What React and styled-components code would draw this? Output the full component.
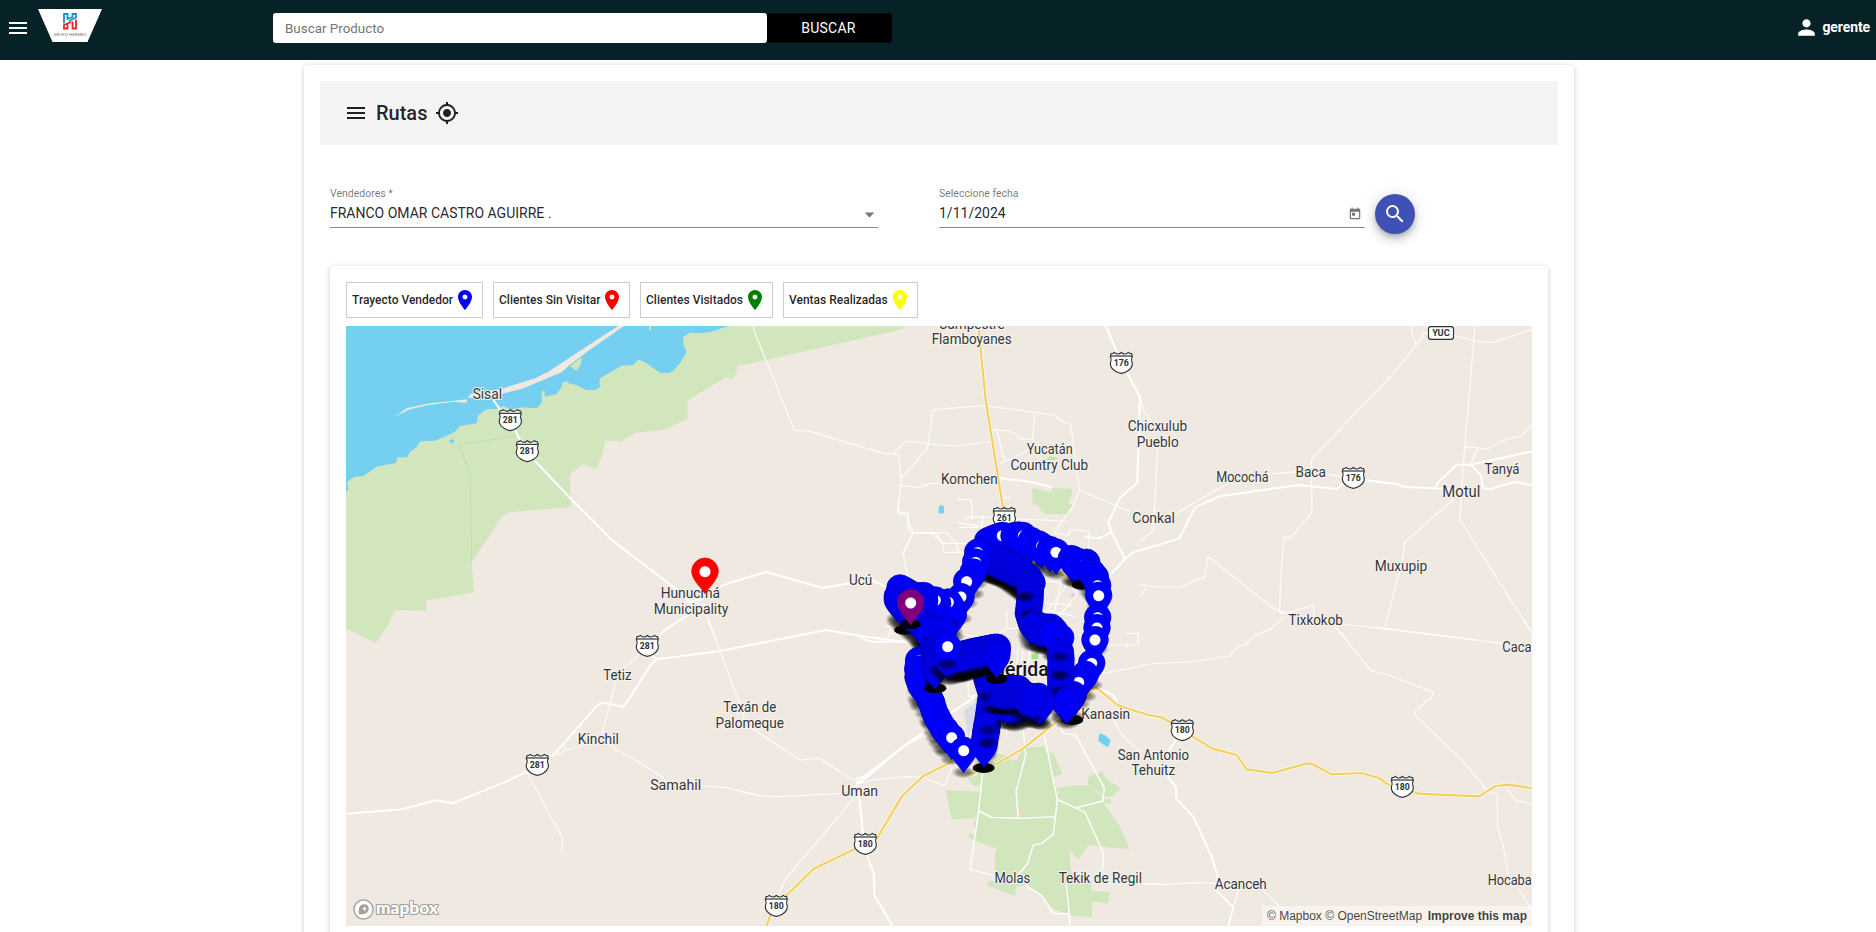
import React from "react";
import styled, { createGlobalStyle } from "styled-components";
import {
  MdMenu,
  MdPerson,
  MdGpsFixed,
  MdSearch,
  MdToday,
  MdLocationOn,
  MdArrowDropDown,
} from "react-icons/md";

const GlobalStyle = createGlobalStyle`
  *, *::before, *::after { box-sizing: border-box; }
  html, body { margin: 0; padding: 0; height: 100%; overflow: hidden; }
  body { background: #fff; font-family: Roboto, "Liberation Sans", sans-serif; color: rgba(0, 0, 0, 0.87); }
`;

const Header = styled.header`
  height: 60px;
  padding: 0 6px 0 3px;
  background: #072227;
  color: #fff;
  display: flex;
  align-items: flex-start;
`;

const MenuButton = styled.button`
  width: 30px;
  height: 24px;
  margin: 16px 5px 0 0;
  padding: 0 3px;
  border: 0;
  background: none;
  color: inherit;
  font-size: 24px;
  line-height: 0;
`;

const LogoSvg = styled.svg`
  display: block;
  margin: 9px 171px 0 0;
`;

const SearchForm = styled.form`
  display: flex;
  margin: 13px 0 0;
  background: #000;
  border-radius: 4px;
`;

const SearchInput = styled.input`
  width: 494px;
  height: 30px;
  border: 0;
  border-radius: 3px;
  padding: 0 12px;
  background: #fff;
  font: 400 13.4px "Roboto", sans-serif;
  &::placeholder { color: #757575; opacity: 1; }
`;

const SearchSubmit = styled.button`
  width: 125px;
  height: 30px;
  border: 0;
  padding: 0 2px 0 0;
  background: none;
  color: #fff;
  font: 400 14px "Roboto", sans-serif;
  letter-spacing: 0.25px;
`;

const User = styled.div`
  margin: 15px 0 0 auto;
  height: 24px;
  display: flex;
  align-items: center;
  gap: 3px;
  font-size: 14px;
  font-weight: 700;
  letter-spacing: -0.1px;
  svg { font-size: 25px; }
  span { line-height: 22px; }
`;

const Page = styled.main`
  width: 1270px;
  height: 900px;
  margin: 5px auto 0 304px;
  padding: 16px;
  border-radius: 4px;
  background: #fff;
  box-shadow: 0 1px 5px rgba(0, 0, 0, 0.22);
`;

const TitleBar = styled.div`
  height: 64px;
  padding: 0 24px;
  background: #f4f4f4;
  display: flex;
  align-items: center;
  gap: 8px;
  svg { font-size: 24px; }
`;

const Title = styled.h1`
  margin: 0;
  font-size: 20px;
  font-weight: 500;
  line-height: 32px;
`;

const Filters = styled.div`
  display: flex;
  align-items: flex-start;
  padding: 41px 10px 0;
  height: 121px;
`;

const Field = styled.div`
  width: ${(p) => p.$width}px;
  margin-right: ${(p) => p.$gap}px;
  padding-top: 1px;
  border-bottom: 1px solid #8c8c8c;
  height: 42px;
`;

const FieldLabel = styled.div`
  font-size: 10.5px;
  line-height: 14px;
  color: rgba(0, 0, 0, 0.54);
`;

const FieldValue = styled.div`
  display: flex;
  align-items: center;
  justify-content: space-between;
  height: 24px;
  font-size: 14px;
  svg { color: rgba(0, 0, 0, 0.54); }
`;

const SelectArrow = styled(MdArrowDropDown)`
  font-size: 23px;
  margin: 2px -3px 0 0;
`;

const DateIcon = styled(MdToday)`
  font-size: 14px;
  margin: 1px 3px 0 0;
`;

const RoundButton = styled.button`
  width: 40px;
  height: 40px;
  margin-top: 8px;
  padding: 0;
  border: 0;
  border-radius: 50%;
  background: #3f51b5;
  color: #fff;
  font-size: 24px;
  display: grid;
  place-items: center;
  box-shadow: 0 3px 5px -1px rgba(0, 0, 0, 0.2), 0 6px 10px rgba(0, 0, 0, 0.14), 0 1px 18px rgba(0, 0, 0, 0.12);
`;

const MapCard = styled.section`
  margin: 0 10px;
  height: 720px;
  padding: 16px;
  border-radius: 4px;
  background: #fff;
  box-shadow: 0 1px 5px rgba(0, 0, 0, 0.22);
`;

const Legend = styled.div`
  display: flex;
  gap: 10px;
  margin-bottom: 8px;
`;

const LegendItem = styled.div`
  width: ${(p) => p.$width}px;
  height: 36px;
  padding-left: 5px;
  border: 1px solid #ccc;
  display: flex;
  align-items: center;
  font-size: 12px;
  font-weight: 500;
  white-space: nowrap;
  svg { font-size: 24px; color: ${(p) => p.$color}; }
`;

const MapView = styled.div`
  position: relative;
  width: 1186px;
  height: 600px;
  overflow: hidden;
  background: #efe9e1;
`;

const MapSvg = styled.svg`
  display: block;
`;

const Attribution = styled.div`
  position: absolute;
  right: 0;
  bottom: 0;
  height: 20px;
  width: 270px;
  padding: 0 5px;
  display: flex;
  justify-content: space-between;
  background: rgba(255, 255, 255, 0.5);
  color: rgba(0, 0, 0, 0.75);
  font: 12px/20px "Liberation Sans", Arial, sans-serif;
  white-space: nowrap;
`;

const MapboxMark = styled.svg`
  position: absolute;
  left: 6px;
  bottom: 5px;
`;

function Logo() {
  return (
    <LogoSvg width="64" height="33" viewBox="0 0 64 33">
      <path d="M0 0H64L49.5 33H14.5Z" fill="#fff" />
      <path d="M26 14.5V5H29.5V10L34.5 8V5H38V8.5L31 12" fill="none" stroke="#1b8fc4" strokeWidth="1.8" />
      <path d="M33 13L26 16V19.5H29.5V15.5M34.5 12.5V19.5H38V10.5" fill="none" stroke="#e3262d" strokeWidth="1.8" />
      <text x="15.5" y="27.2" fontSize="4.3" fill="#777" textLength="33" lengthAdjust="spacingAndGlyphs" fontFamily="Roboto">
        GRUPO HERMES
      </text>
    </LogoSvg>
  );
}

/* Every sector is drafted at three units per pixel from its own origin. */
const Sector = ({ x, y, children }) => (
  <g transform={`translate(${x} ${y}) scale(${1 / 3})`}>{children}</g>
);

const Minor = ({ d }) => <path d={d} fill="none" stroke="#fff" strokeOpacity="0.85" strokeWidth="3.6" strokeLinejoin="round" />;
const Major = ({ d }) => <path d={d} fill="none" stroke="#fff" strokeWidth="6" strokeLinejoin="round" />;
const Highway = ({ d }) => (
  <>
    <path d={d} fill="none" stroke="#fff" strokeWidth="10" strokeLinejoin="round" />
    <path d={d} fill="none" stroke="#f3cf5b" strokeWidth="6.5" strokeLinejoin="round" />
  </>
);
const Park = ({ d }) => <path d={d} fill="#d2e6be" />;
const Water = ({ d }) => <path d={d} fill="#75cff0" />;

const Label = ({ x, y, w, size = 43, color = "#33363b", anchor = "middle", weight = 400, children }) => (
  <text
    x={x}
    y={y}
    textLength={w}
    lengthAdjust="spacingAndGlyphs"
    textAnchor={anchor}
    fontSize={size}
    fontWeight={weight}
    fontFamily="Roboto, sans-serif"
    fill={color}
    stroke="#f7f4f0"
    strokeWidth="6"
    strokeLinejoin="round"
    paintOrder="stroke"
  >
    {children}
  </text>
);

const Shield = ({ x, y, n }) => (
  <g transform={`translate(${x} ${y})`}>
    <path
      d="M-31 -27Q-25 -27 -21 -31Q-16 -26 -10 -26Q-4 -26 0 -31Q4 -26 10 -26Q16 -26 21 -31Q25 -27 31 -27L33 -18Q29 -12 31 -6Q35 2 32 10C28 22 12 30 0 32C-12 30 -28 22 -32 10Q-35 2 -31 -6Q-29 -12 -33 -18Z"
      fill="#fff"
      stroke="#2d3136"
      strokeWidth="3.4"
      strokeLinejoin="round"
    />
    <path d="M-32 -20H32" stroke="#2d3136" strokeWidth="3.6" />
    <text y="10" textAnchor="middle" fontSize="28" fontWeight="700" fontFamily="Roboto, sans-serif" fill="#2d3136" textLength="45" lengthAdjust="spacingAndGlyphs">
      {n}
    </text>
  </g>
);

const Pin = ({ x, y, color = "#0000ff", hole = true, shadow = 0.55, edge = "#0000bb" }) => (
  <g transform={`translate(${x} ${y})`}>
    {shadow > 0 && <ellipse cy="65" rx="36" ry="18" fill="url(#pinShadow)" opacity={shadow} />}
    <path
      d="M0 66C-8 51 -40 25 -40 -1A40 40 0 0 1 40 -1C40 25 8 51 0 66Z"
      fill={color}
      stroke={edge}
      strokeWidth="2"
    />
    {hole && <circle r="17" fill="#fff" stroke={edge} strokeOpacity="0.5" strokeWidth="1.5" />}
  </g>
);

const walk = (points, step) => {
  const out = [];
  for (let i = 0; i < points.length - 1; i++) {
    const [ax, ay] = points[i];
    const [bx, by] = points[i + 1];
    const n = Math.max(1, Math.round(Math.hypot(bx - ax, by - ay) / step));
    for (let k = 0; k < n; k++) out.push([ax + ((bx - ax) * k) / n, ay + ((by - ay) * k) / n]);
  }
  out.push(points[points.length - 1]);
  return out;
};

const Trail = ({ points, step = 11, color = "#0000ee", shadow = 0.55 }) =>
  walk(points, step).map(([x, y], i) => (
    <Pin key={i} x={x} y={y} hole={false} color={color} edge="#0000b4" shadow={shadow} />
  ));

const Stops = ({ points }) => points.map(([x, y], i) => <Pin key={i} x={x} y={y} />);

const Blot = ({ x, y, rx = 33, ry = 15 }) => <ellipse cx={x} cy={y} rx={rx} ry={ry} fill="#000" />;

const Smudge = ({ x, y, rx = 32, ry = 18, opacity = 0.7 }) => (
  <ellipse cx={x} cy={y} rx={rx} ry={ry} fill="url(#pinShadow)" opacity={opacity} />
);

function Terrain() {
  return (
    <>
      <Sector x={340} y={320}>
        <Park d="M18 18H1690V27L1260 124 1190 139V157L1175 179 1160 171 1043 241V297L970 329 885 339 842 365 826 362H796L785 412 767 447 729 433 690 462 692 562 511 576 487 588 395 728 402 817 258 842 260 872 165 870 143 918 106 969 18 925Z" />
        <Water d="M18 18H1167L1150 23 1115 35 1085 40 1050 38 1030 50V75L1040 95 1020 130 1000 152 985 159 960 158 940 145 920 130 895 118 880 135 845 137 780 175 778 190 782 200 765 210H738L710 195 685 190 680 182 668 188 665 200 650 222 615 230 613 212 604 215 606 245 595 262 583 265 555 262 510 268 490 258 475 266 440 268 415 285 410 310 360 318 345 335 310 352 285 362H262L240 365 230 382 210 395 200 412H172L168 430 150 432 110 440 70 468 45 470 22 485 25 510 18 515Z" />
        <path d="M852 18H835L720 92 625 155 585 175 480 208 390 222 384 234 430 233 500 218 545 207 665 157 690 134 735 100ZM165 290L200 265 270 250 365 240 382 238 380 248 340 245 265 255 210 268Z" fill="#efe9e1" />
        <Park d="M690 138L725 112 722 135 708 152ZM928 18H933V30H928Z" />
        <Water d="M327 362L336 357 344 364 335 372Z" />
        <path d="M525 348L358 374 391 467 395 728" fill="none" stroke="#b9e2a4" strokeWidth="3" />
        <Major d="M460 240L480 268M525 330L545 370M585 423L720 565 818 662 1005 805 1050 845 1090 835M1100 815L1180 785 1278 756 1449 804 1584 780M1050 880L975 930 925 975" />
        <Minor d="M1040 845L1100 855M1060 850V890M1100 885L1128 960" />
      </Sector>
      <Sector x={340} y={620}>
        <Major d="M18 581L187 568 288 541 338 550 500 484 560 455M630 412L650 395 770 258 787 248 850 260 862 245 935 130 950 118 1140 93 1458 30 1563 48 1695 66M930 100L950 118" />
        <Minor d="M560 455L668 655 664 700M905 98L848 148M828 185L785 345M650 405L680 390 735 375M670 370L677 390M810 378L890 422 968 472 980 490M1085 498L1155 502 1260 527M1105 0L1140 93 1197 245 1215 300" />
      </Sector>
      <Sector x={740} y={320}>
        <Park d="M877 503L935 518 940 503 997 507 995 525 985 550 998 553 985 582 917 583 902 570 897 555 877 553Z" />
        <path d="M917 420L930 408 955 415 945 420Z" fill="#b9e8a4" />
        <Water d="M597 558L608 555 612 560V580H595Z" />
        <Minor d="M40 18L43 35 163 330 213 335 430 400 475 403 484 478 473 575 502 592 506 630 518 640 490 700M460 400L500 363 565 372 645 378 750 366M484 474L560 388 565 372 578 272 590 268 735 257 945 285 960 300 992 313 1018 510M480 496L535 503 570 490H610M757 328L800 332 833 345 838 355 878 358 884 280M770 330L793 420M878 370L850 400 780 430M1018 510L1170 575M1018 510L998 560 940 640M650 538H694L697 600M650 607L725 620 730 585M670 600L690 590 760 592M660 622H715M575 640L610 670 612 697H670M515 638L575 640 620 637 645 665 660 700M830 597L980 603M790 535L812 530M940 640L985 645 990 627 1048 635 1045 690M1200 232L1210 270 1240 315" />
        <Major d="M1098 18L1130 95M1160 155L1200 232 1192 488 1140 533 1105 608 1115 637 1155 717 1180 697 1320 655M1115 637L1075 655 1035 650M1155 717L1110 765M780 475L870 485 935 502" />
        <Highway d="M716 18L722 90 737 240 790 570" />
      </Sector>
      <Sector x={1140} y={320}>
        <Major d="M118 655L165 562 238 529 475 495 590 507 610 490M675 481L765 491 795 501 885 505 895 487 950 434H992L1176 394M885 505L960 510M992 434L1022 465 1030 505 1050 507 1123 486 1176 495" />
        <Minor d="M815 18L817 40 828 75M865 38H848V52L765 155 517 415 514 430 516 578 452 653 433 652 425 730 418 878 440 880M942 47L1005 63 1060 68 1176 28M1005 18L970 430 960 600 1176 940M975 380L1040 387 1100 357 1140 350 1176 315M1015 383L992 432M105 582L265 490M385 463L470 455M560 463L605 470M940 538L793 668 785 730 735 920M522 890L520 855 440 880 400 865 204 710 193 772 165 782 125 801 50 801 0 793M20 801L0 830M53 380L40 630 0 665M610 912L1010 960M585 920L620 960" />
      </Sector>
      <Sector x={860} y={500}>
        <path d="M312 632L358 600 345 660 325 710Z" fill="#d6dae6" />
        <path d="M628 283L642 278 650 288 635 292Z" fill="#efcddd" />
        <path d="M515 462L535 455V478H515Z" fill="#a5e296" />
        <Park d="M355 820L385 800 420 820 400 850 330 850Z" />
        <Minor d="M115 0V35L145 40V65L160 98 225 98 250 130 320 130M160 98L130 160 145 240 155 260M75 380H95L80 425M110 400H85M300 400L400 420 435 385 480 385M325 480V590L400 575M440 380V330M480 545L490 430M465 545L475 440M500 540L510 440M520 240L640 250M600 345L650 285 640 240M560 330L650 350M560 310L640 315M700 445L755 435H835V400H800M725 520L840 500M800 430V445M480 640V700M520 640V690M440 675V710M575 670L560 700M620 255L540 360M605 240L580 350" />
        <Major d="M35 240L75 260M0 850L135 735 345 590M0 413L35 425H140" />
        <Highway d="M520 190L630 235" />
        <Water d="M718 700L735 706 752 720 745 742 728 733 715 722Z" />
      </Sector>
      <Sector x={740} y={640}>
        <Park d="M850 322L915 320 918 335 940 340 968 402 940 412 950 445 990 437 1045 437 1065 450 1085 470 1090 490 1140 560 1170 628 1045 615 1013 660 988 628 992 690 1000 705 1052 725 1055 752 1108 755 1105 790 1055 785V833L990 825 940 808 905 767 860 735 828 740 825 768 742 737 745 722 790 725 765 690V645L770 625 740 615 720 608 683 590 690 580 710 585 700 550 715 530 722 440 735 400 750 370 830 360Z" />
        <Park d="M617 450L725 455 715 535 635 538ZM683 415L728 400 718 440 700 437ZM1045 410L1085 392 1100 418 1142 445 1115 470H1090L1070 450 1042 440ZM1090 478H1113V490H1090ZM762 340L815 350 810 362 765 368Z" />
        <path d="M834 495H843L847 525 838 530ZM832 538H855V544H832Z" fill="#ead9b5" />
        <Minor d="M20 255L180 360 237 355 340 420M0 455L60 467 110 470 320 460M365 430L395 420 500 410 550 412 613 438 635 385M340 475L255 578 135 718 115 765M350 410V475M372 408L340 420M1120 240L1150 290 1200 335M1210 733L1270 733M690 688L760 706" />
        <path
          d="M728 400L715 520 690 688M715 512L755 532 845 535 945 530M850 270L857 345 828 455 835 535M910 280L920 320 952 480 940 583 905 610 880 615 862 672 830 710 870 745 905 767 940 820 990 822M952 478L1035 517 1090 640 1088 690M1010 503L1088 483 1093 445 1007 285 970 280 960 260M978 730L985 790 990 857"
          fill="none"
          stroke="#fff"
          strokeWidth="4.2"
          strokeLinejoin="round"
        />
        <Major d="M363 415L355 430 358 475 370 590M555 283L495 317 365 415M380 645L402 702 403 765 457 857M1065 140L1120 165 1133 190" />
        <Highway d="M80 857L95 815M135 770L220 687 345 627M410 597L487 467 550 408 640 363M680 400L710 398M765 375L850 325 950 245 1040 175 1065 140 1133 195 1230 228 1260 231" />
      </Sector>
      <Sector x={1140} y={620}>
        <Major d="M108 360L85 395M80 465L108 503V535L160 590 215 710 232 765 228 810 280 862 265 917" />
        <Minor d="M295 810L280 862M355 800L390 830 420 860 510 917M590 25L693 152 745 165 880 217 873 235 855 247 825 275 827 287 970 425 1040 510 1072 525 1073 620 1088 670 1105 765M1135 805L1176 870M1097 502L1128 542 1176 552M0 138L35 131 145 126 270 108 293 80 315 75 340 50 395 25 430 -8M710 22L1085 70M1150 0L1176 40M0 790L70 794 175 788 225 790" />
        <Highway d="M0 277L25 285 67 293 100 312M155 348L215 385 290 405 320 448 398 459 500 430 517 432 575 463 665 459 717 474 750 497M815 513L835 521 1017 529 1067 498 1105 494 1176 504" />
      </Sector>
    </>
  );
}

function Places() {
  return (
    <>
      <Sector x={340} y={320}>
        <Label x={442} y={237} w={88}>Sisal</Label>
        <Label x={1051} y={833} w={178}>Hunucmá</Label>
        <Label x={1053} y={881} w={224}>Municipality</Label>
        <Shield x={511} y={300} n="281" />
        <Shield x={562} y={393} n="281" />
        <Pin x={1095} y={755} color="#ff0000" edge="#e00000" shadow={0} />
      </Sector>
      <Sector x={340} y={620}>
        <Label x={832} y={181} w={85}>Tetiz</Label>
        <Label x={775} y={373} w={123}>Kinchil</Label>
        <Label x={1007} y={511} w={153}>Samahil</Label>
        <Label x={1229} y={277} w={159}>Texán de</Label>
        <Label x={1229} y={323} w={205}>Palomeque</Label>
        <Shield x={922} y={77} n="281" />
        <Shield x={592} y={434} n="281" />
      </Sector>
      <Sector x={740} y={320}>
        <Label x={695} y={26} w={198}>Campestre</Label>
        <Label x={695} y={73} w={240}>Flamboyanes</Label>
        <Label x={929} y={403} w={138}>Yucatán</Label>
        <Label x={928} y={451} w={233}>Country Club</Label>
        <Label x={688} y={492} w={170}>Komchen</Label>
        <Shield x={1144} y={128} n="176" />
        <Shield x={793} y={593} n="261" />
      </Sector>
      <Sector x={1140} y={320}>
        <Label x={52} y={334} w={178}>Chicxulub</Label>
        <Label x={53} y={380} w={126}>Pueblo</Label>
        <Label x={307} y={487} w={157}>Mocochá</Label>
        <Label x={512} y={472} w={91}>Baca</Label>
        <Label x={1086} y={461} w={105}>Tanyá</Label>
        <Label x={964} y={532} w={114} size={47}>Motul</Label>
        <Label x={783} y={752} w={158}>Muxupip</Label>
        <Label x={527} y={915} w={163}>Tixkokob</Label>
        <Label x={41} y={610} w={128}>Conkal</Label>
        <Shield x={640} y={473} n="176" />
        <rect x="865.5" y="20" width="75" height="38" rx="7" fill="#fff" stroke="#2d3136" strokeWidth="3.4" />
        <text x="903" y="47" textAnchor="middle" fontSize="27" fontWeight="700" fontFamily="Roboto" fill="#2d3136" textLength="52" lengthAdjust="spacingAndGlyphs">YUC</text>
      </Sector>
      <Sector x={740} y={640}>
        <Label x={359} y={469} w={111}>Uman</Label>
        <Label x={817} y={729} w={107}>Molas</Label>
        <Label x={1081} y={730} w={250}>Tekik de Regil</Label>
        <Label x={1240} y={360} w={214}>San Antonio</Label>
        <Label x={1240} y={406} w={131}>Tehuitz</Label>
        <Shield x={376} y={611} n="180" />
        <Shield x={109} y={797} n="180" />
      </Sector>
      <Sector x={1140} y={620}>
        <Label x={1087} y={96} w={88} anchor="start">Caca</Label>
        <Label x={1043} y={796} w={132} anchor="start">Hocaba</Label>
        <Label x={302} y={807} w={156}>Acanceh</Label>
        <Shield x={127} y={330} n="180" />
        <Shield x={787} y={500} n="180" />
      </Sector>
      <Sector x={860} y={500}>
        <Label x={2} y={256} w={70}>Ucú</Label>
        <Label x={737} y={658} w={147}>Kanasin</Label>
        <Label x={475} y={529} w={182} size={59} color="#111" weight={500}>Mérida</Label>
      </Sector>
    </>
  );
}

function Route() {
  return (
    <Sector x={860} y={500}>
      {/* northern arc, west to east */}
      <Trail points={[[383, 124], [412, 112]]} color="#0000ff" />
      <Pin x={427} y={107} />
      <Trail points={[[462, 108], [476, 106]]} color="#0000ff" />
      <Stops points={[[490, 108], [514, 123]]} />
      <Pin x={536} y={133} hole={false} />
      <Stops points={[[545, 139]]} />
      <Pin x={570} y={150} hole={false} />
      <Pin x={588} y={157} />

      {/* eastern side, north to south */}
      <Trail points={[[634, 177], [650, 184]]} color="#0000ff" />
      <Blot x={665} y={254} rx={30} />
      <Pin x={680} y={188} hole={false} />
      <Stops points={[[674, 194]]} />
      <Trail points={[[690, 212], [706, 232]]} color="#0000ff" step={14} />
      <Stops points={[[713, 257], [716, 287], [713, 353], [711, 384], [705, 420], [695, 490]]} />
      <Pin x={676} y={524} hole={false} />
      <Pin x={656} y={547} />

      {/* inner descent through the north of the city */}
      <Trail points={[[375, 165], [400, 172], [435, 182], [470, 210], [505, 232], [516, 250]]} step={9} />
      <Trail points={[[400, 170], [475, 205], [512, 250], [510, 300], [505, 340], [515, 372]]} step={13} color="#0000e4" />
      <Smudge x={495} y={290} />
      <Smudge x={510} y={345} ry={22} opacity={0.6} />
      <Smudge x={512} y={392} ry={16} opacity={0.5} />
      <Trail points={[[528, 374], [545, 382], [574, 383], [585, 395]]} step={9} color="#0000f0" />
      <Pin x={602} y={414} />
      <Trail points={[[584, 404], [578, 402]]} color="#0000f4" />
      <Trail points={[[601, 456], [603, 480], [602, 540], [603, 590]]} step={16} shadow={0.7} />
      <Smudge x={600} y={470} opacity={0.5} />
      <Smudge x={600} y={525} ry={20} />
      <Smudge x={598} y={575} ry={20} />
      <Blot x={637} y={660} />
      <Trail points={[[640, 585], [628, 600], [620, 606]]} step={9} color="#0000f4" />

      {/* north-western side, down to the depot */}
      <Stops points={[[353, 158], [347, 187]]} />
      <Pin x={340} y={217} hole={false} />
      <Stops points={[[320, 245], [303, 291]]} />
      <Trail points={[[272, 318], [280, 345]]} step={14} color="#0000ff" />
      <Pin x={265} y={307} />
      <Pin x={233} y={312} hole={false} />
      <Pin x={226} y={301} />
      <Trail points={[[194, 304], [192, 288], [165, 290], [130, 270], [120, 265]]} step={10} color="#0000ff" />
      <Blot x={133} y={390} rx={31} ry={14} />
      <Trail points={[[112, 290], [112, 300], [130, 318], [190, 370], [250, 395]]} step={12} color="#0000f4" />
      <Pin x={222} y={414} />
      <Trail points={[[180, 365], [206, 398]]} step={10} color="#0000f0" />

      {/* south-western leg */}
      <Trail points={[[190, 488], [176, 492]]} color="#0000ff" />
      <Pin x={176} y={482} />
      <Pin x={173} y={508} />
      <Trail points={[[174, 532], [182, 555]]} color="#0000ff" />
      <Pin x={198} y={576} />
      <Trail points={[[209, 597], [216, 612]]} color="#0000ff" />
      <Pin x={222} y={632} />
      <Pin x={230} y={650} hole={false} />
      <Pin x={238} y={665} />
      <Pin x={248} y={682} hole={false} />
      <Pin x={257} y={692} hole={false} />
      <Stops points={[[275, 713], [311, 752]]} />
      <Trail points={[[222, 440], [225, 500]]} step={12} color="#0000dc" />
      <Blot x={226} y={565} />
      <Pin x={225} y={503} hole={false} color="#0000e0" shadow={0} />
      <Smudge x={232} y={510} opacity={0.5} />

      {/* southern column */}
      <Trail points={[[380, 535], [395, 585], [387, 640], [378, 700]]} step={12} color="#0000e0" />
      <Blot x={371} y={804} />
      <Trail points={[[380, 680], [372, 737]]} step={12} shadow={0.2} color="#0000f0" />
      <Smudge x={385} y={690} opacity={0.5} />
      <Smudge x={382} y={728} ry={20} opacity={0.6} />
      <Trail points={[[535, 590], [545, 608]]} step={10} />
      <Trail points={[[430, 605], [465, 614], [500, 600], [540, 608]]} step={13} />
      <Smudge x={420} y={634} rx={45} ry={10} opacity={0.8} />
      <Smudge x={500} y={634} rx={45} ry={10} opacity={0.6} />
      <Trail points={[[395, 560], [430, 567], [475, 567], [490, 585], [520, 592]]} step={9} color="#0000e8" shadow={0.3} />
      <Smudge x={375} y={590} rx={20} opacity={0.5} />

      {/* crossing of the centre */}
      <Trail points={[[250, 455], [265, 475], [310, 465]]} step={11} color="#0000e4" />
      <Trail points={[[300, 466], [340, 456], [380, 448], [405, 443]]} step={9} color="#0000ec" shadow={0.7} />
      <Blot x={410} y={536} rx={32} ry={16} />
      <Trail points={[[412, 443], [410, 468]]} step={8} shadow={0} />
      <Pin x={263} y={440} shadow={0} />
      <Smudge x={262} y={492} opacity={0.6} />
      <Blot x={152} y={373} rx={31} />
      <Pin x={152} y={309} color="#800080" edge="#6d006d" shadow={0} />
    </Sector>
  );
}

function RouteMap() {
  return (
    <MapView>
      <MapSvg width="1186" height="600" viewBox="346 326 1186 600">
        <defs>
          <radialGradient id="pinShadow">
            <stop offset="0" stopColor="#000" />
            <stop offset="0.55" stopColor="#000" stopOpacity="0.7" />
            <stop offset="1" stopColor="#000" stopOpacity="0" />
          </radialGradient>
        </defs>
        <Terrain />
        <Places />
        <Route />
      </MapSvg>
      <MapboxMark width="90" height="24" viewBox="0 0 90 24">
        <circle cx="11.5" cy="12.5" r="9.6" fill="#fff" stroke="#a3a09b" strokeWidth="1.4" />
        <path d="M7 17.2C6 12 7.5 7.2 12.3 7.2A4.6 4.6 0 0 1 16.7 11.8C16.7 16.5 12 17.7 7 17.2Z" fill="#a3a09b" />
        <path d="M12.5 9L13.3 11 15.2 11.8 13.3 12.6 12.5 14.6 11.7 12.6 9.8 11.8 11.7 11Z" fill="#fff" />
        <text x="24" y="17.3" fontFamily="Lato, sans-serif" fontWeight="900" fontSize="17" fill="#fff" stroke="#a3a09b" strokeWidth="2.2" strokeLinejoin="round" paintOrder="stroke" textLength="62" lengthAdjust="spacingAndGlyphs">
          mapbox
        </text>
      </MapboxMark>
      <Attribution>
        <span>© Mapbox © OpenStreetMap</span>
        <b>Improve this map</b>
      </Attribution>
    </MapView>
  );
}

const legend = [
  { text: "Trayecto Vendedor", color: "#0000ff", width: 137 },
  { text: "Clientes Sin Visitar", color: "#ff0000", width: 137 },
  { text: "Clientes Visitados", color: "#008000", width: 133 },
  { text: "Ventas Realizadas", color: "#ffff00", width: 135 },
];

export default function App() {
  return (
    <>
      <GlobalStyle />
      <Header>
        <MenuButton type="button"><MdMenu /></MenuButton>
        <Logo />
        <SearchForm>
          <SearchInput placeholder="Buscar Producto" />
          <SearchSubmit type="button">BUSCAR</SearchSubmit>
        </SearchForm>
        <User>
          <MdPerson />
          <span>gerente</span>
        </User>
      </Header>
      <Page>
        <TitleBar>
          <MdMenu />
          <Title>Rutas</Title>
          <MdGpsFixed />
        </TitleBar>
        <Filters>
          <Field $width={548} $gap={61}>
            <FieldLabel>Vendedores *</FieldLabel>
            <FieldValue>FRANCO OMAR CASTRO AGUIRRE .<SelectArrow /></FieldValue>
          </Field>
          <Field $width={426} $gap={10}>
            <FieldLabel>Seleccione fecha</FieldLabel>
            <FieldValue>1/11/2024<DateIcon /></FieldValue>
          </Field>
          <RoundButton type="button"><MdSearch /></RoundButton>
        </Filters>
        <MapCard>
          <Legend>
            {legend.map((item) => (
              <LegendItem key={item.text} $width={item.width} $color={item.color}>
                {item.text}
                <MdLocationOn />
              </LegendItem>
            ))}
          </Legend>
          <RouteMap />
        </MapCard>
      </Page>
    </>
  );
}
